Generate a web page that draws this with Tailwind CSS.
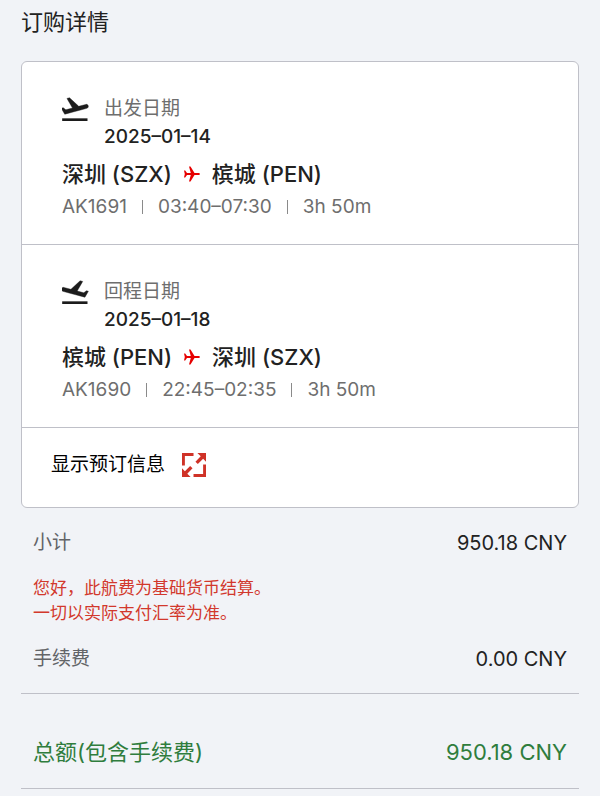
<!DOCTYPE html>
<html lang="zh-CN">
  <head>
    <meta charset="UTF-8" />
    <meta name="viewport" content="width=device-width, initial-scale=1.0" />
    <title>订购详情</title>
    <script src="https://cdn.jsdelivr.net/npm/@tailwindcss/browser@4"></script>
  </head>
  <body class="bg-[#f1f3f7] font-['Inter','Noto_Sans_CJK_SC',sans-serif] text-[#222222]">
    <!-- shared icons -->
    <svg class="hidden">
      <symbol id="takeoff" viewBox="2.5 3 20 18" class="overflow-visible">
        <path d="M2.5 19h19v2h-19z" />
        <path stroke="#1c1c1c" stroke-width="0.3" d="M22.07 9.64c-.21-.8-1.04-1.28-1.84-1.06L14.92 10l-6.9-6.43-1.93.51 4.14 7.17-4.97 1.33-1.97-1.54-1.45.39 1.82 3.16.77 1.33 1.6-.43 5.31-1.42 4.35-1.16L21 11.49c.81-.23 1.28-1.05 1.07-1.85z" />
      </symbol>
      <symbol id="landing" viewBox="2.5 3 20 18" class="overflow-visible">
        <path d="M2.5 19h19v2h-19z" />
        <path transform="matrix(-1 0 0 1 24 0)" stroke="#1c1c1c" stroke-width="0.3" d="M22.07 9.64c-.21-.8-1.04-1.28-1.84-1.06L14.92 10l-6.9-6.43-1.93.51 4.14 7.17-4.97 1.33-1.97-1.54-1.45.39 1.82 3.16.77 1.33 1.6-.43 5.31-1.42 4.35-1.16L21 11.49c.81-.23 1.28-1.05 1.07-1.85z" />
      </symbol>
      <symbol id="plane" viewBox="0 0 16 16">
        <path d="M0 4.5h1.2L3 6.9H6.8L5 0.5h1.5L10.5 6.9H14.8a1.1 1.1 0 0 1 0 2.2H10.5L6.5 15.5H5L6.8 9.1H3L1.2 11.5H0L.8 8z" />
      </symbol>
    </svg>

    <main class="px-[21px]">
      <h1 class="pt-1.5 text-[22px] leading-8">订购详情</h1>

      <div class="mt-[23px] rounded-md border border-[#bfc0c8] bg-white">
        <section class="border-b border-[#bfc0c8] px-10 pt-[33px] pb-[21px]">
          <div class="flex gap-[15px]">
            <svg class="mt-0.5 h-6 w-[27px] shrink-0 fill-[#1c1c1c]"><use href="#takeoff" /></svg>
            <div>
              <p class="text-[19px] leading-7 text-[#6e6e6e]">出发日期</p>
              <p class="text-[19px] leading-7 font-medium">2025–01–14</p>
            </div>
          </div>
          <h2 class="mt-[7px] flex items-center gap-3 text-[22px] leading-8 font-medium">
            <span>深圳 (SZX)</span>
            <svg class="size-4 fill-[#e60000]"><use href="#plane" /></svg>
            <span>槟城 (PEN)</span>
          </h2>
          <p class="flex items-center gap-[15px] text-[19px] leading-[33px] text-[#6e6e6e]">
            <span>AK1691</span>
            <span class="h-3.5 w-px bg-[#8a8a8a]"></span>
            <span>03:40–07:30</span>
            <span class="h-3.5 w-px bg-[#8a8a8a]"></span>
            <span>3h 50m</span>
          </p>
        </section>

        <section class="border-b border-[#bfc0c8] px-10 pt-[33px] pb-[21px]">
          <div class="flex gap-[15px]">
            <svg class="mt-0.5 h-6 w-[27px] shrink-0 fill-[#1c1c1c]"><use href="#landing" /></svg>
            <div>
              <p class="text-[19px] leading-7 text-[#6e6e6e]">回程日期</p>
              <p class="text-[19px] leading-7 font-medium">2025–01–18</p>
            </div>
          </div>
          <h2 class="mt-[7px] flex items-center gap-3 text-[22px] leading-8 font-medium">
            <span>槟城 (PEN)</span>
            <svg class="size-4 fill-[#e60000]"><use href="#plane" /></svg>
            <span>深圳 (SZX)</span>
          </h2>
          <p class="flex items-center gap-[15px] text-[19px] leading-[33px] text-[#6e6e6e]">
            <span>AK1690</span>
            <span class="h-3.5 w-px bg-[#8a8a8a]"></span>
            <span>22:45–02:35</span>
            <span class="h-3.5 w-px bg-[#8a8a8a]"></span>
            <span>3h 50m</span>
          </p>
        </section>

        <button type="button" class="flex w-full cursor-pointer items-center gap-[17px] px-[29px] pt-[21px] pb-[26px] text-[19px] leading-8 text-black">
          显示预订信息
          <svg class="size-6 fill-[#cf3227]" viewBox="0 0 25 25">
            <path d="M0 0h12v3H3v10H0zM25 25H12v-3h10V12h3zM16 0h9v9l-3-3-5.500 5.500-2.500-2.500 5.500-5.500zM9 25H0v-9l3 3 5.500-5.500 2.500 2.500-5.500 5.500z" />
          </svg>
        </button>
      </div>

      <dl class="px-3 pt-[19px] text-[19px] leading-8">
        <div class="flex justify-between">
          <dt class="text-[#626467]">小计</dt>
          <dd class="text-[20px] leading-8">950.18 CNY</dd>
        </div>
        <div class="my-[17px] text-[17px] leading-[25px] text-[#d2382c]">
          <p>您好，此航费为基础货币结算。</p>
          <p>一切以实际支付汇率为准。</p>
        </div>
        <div class="flex justify-between">
          <dt class="text-[#626467]">手续费</dt>
          <dd class="text-[20px] leading-8">0.00 CNY</dd>
        </div>
      </dl>

      <dl class="mt-[18px] flex justify-between border-y border-[#bfc0c8] px-3 pt-[42px] pb-5 text-[22px] leading-8 text-[#2f7d3d]">
        <dt>总额(包含手续费)</dt>
        <dd>950.18 CNY</dd>
      </dl>
    </main>
  </body>
</html>
